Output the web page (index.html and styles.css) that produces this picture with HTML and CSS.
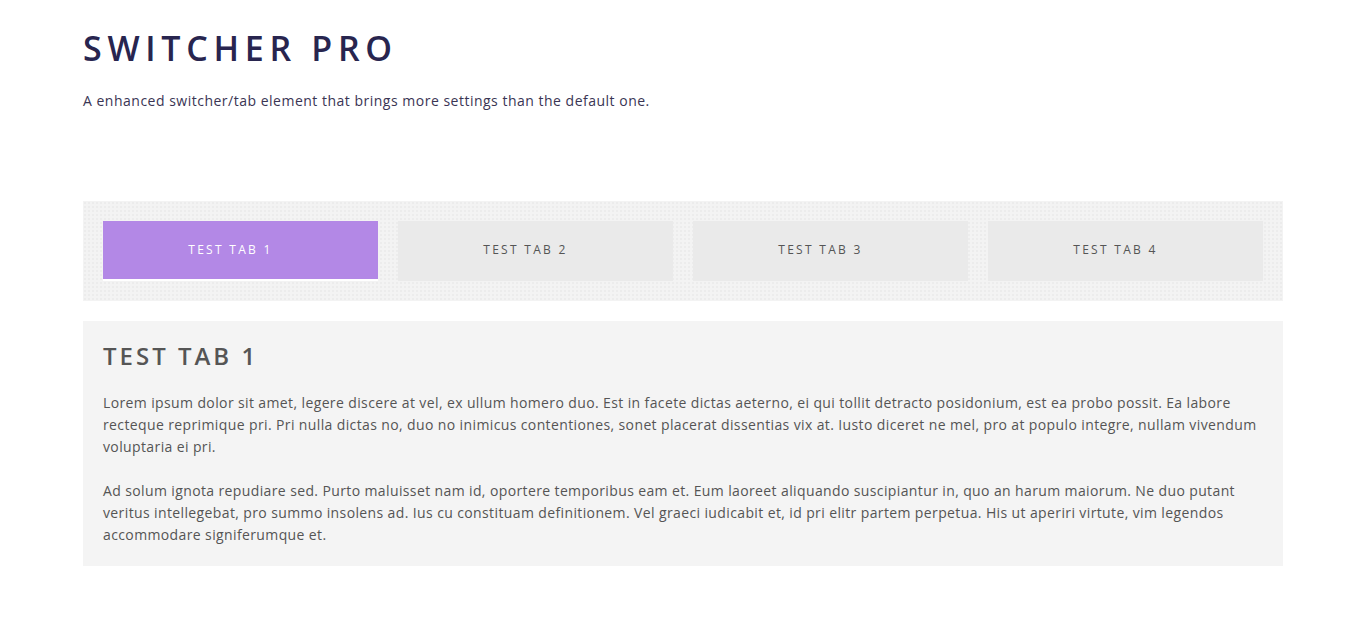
FILE: index.html
```html
<!DOCTYPE html>
<html>
	<head>
		<meta charset="UTF-8">
		<title>Switcher Pro</title>
		<link rel="stylesheet" href="styles.css">
	</head>
	<body>
		<div class="page">
			<div class="intro">
				<h1 class="intro-title">Switcher Pro</h1>
				<p class="intro-text">A enhanced switcher/tab element that brings more settings than the default one.</p>
			</div>
			<div class="switcher">
				<ul class="tabs">
					<li class="tab active">Test Tab 1</li>
					<li class="tab">Test Tab 2</li>
					<li class="tab">Test Tab 3</li>
					<li class="tab">Test Tab 4</li>
				</ul>
				<div class="panel">
					<h2 class="panel-title">Test Tab 1</h2>
					<p>Lorem ipsum dolor sit amet, legere discere at vel, ex ullum homero duo. Est in facete dictas aeterno, ei qui tollit detracto posidonium, est ea probo possit. Ea labore recteque reprimique pri. Pri nulla dictas no, duo no inimicus contentiones, sonet placerat dissentias vix at. Iusto diceret ne mel, pro at populo integre, nullam vivendum voluptaria ei pri.</p>
					<p>Ad solum ignota repudiare sed. Purto maluisset nam id, oportere temporibus eam et. Eum laoreet aliquando suscipiantur in, quo an harum maiorum. Ne duo putant veritus intellegebat, pro summo insolens ad. Ius cu constituam definitionem. Vel graeci iudicabit et, id pri elitr partem perpetua. His ut aperiri virtute, vim legendos accommodare signiferumque et.</p>
				</div>
			</div>
		</div>
	</body>
</html>
```

FILE: styles.css
```css
*{
	padding: 0px;margin: 0px;
}
body{
	background: #fff;
	font-family: "Open Sans", "Liberation Sans", sans-serif;
	color: #555;
}
.page{
	width: 1200px;
	margin: 0 auto;
}
.intro{
	padding-top: 26px;
	height: 175px;
}
.intro-title{
	font-family: "Open Sans", sans-serif;
	font-size: 34px;
	font-weight: 600;
	line-height: 44px;
	letter-spacing: 5.7px;
	text-transform: uppercase;
	color: #28254f;
}
.intro-text{
	margin-top: 21px;
	font-size: 14px;
	line-height: 20px;
	letter-spacing: 0.5px;
	color: #3a3554;
}
ul{
	list-style: none;
}
.tabs{
	display: flex;
	gap: 20px;
	padding: 20px;
	background-color: #f3f3f3;
	background-image: radial-gradient(#ececec 1px, transparent 1px);
	background-size: 4px 4px;
}
.tab{
	flex: 1;
	height: 60px;
	padding-right: 20px;
	line-height: 58px;
	text-align: center;
	background: #eaeaea;
	font-size: 12px;
	letter-spacing: 2.3px;
	text-transform: uppercase;
	color: #555;
	box-sizing: border-box;
}
.tab.active{
	background: #b388e6;
	border-bottom: 2px solid #fff;
	color: #fff;
}
.panel{
	margin-top: 20px;
	padding: 20px 20px 20px;
	background: #f4f4f4;
}
.panel-title{
	font-family: "Open Sans", sans-serif;
	font-size: 24px;
	font-weight: 600;
	line-height: 30px;
	letter-spacing: 3px;
	text-transform: uppercase;
	color: #555;
	margin-bottom: 21px;
}
.panel p{
	font-size: 14px;
	line-height: 22px;
	letter-spacing: 0.38px;
	margin-bottom: 22px;
}
.panel p:last-child{
	margin-bottom: 0;
}
```
